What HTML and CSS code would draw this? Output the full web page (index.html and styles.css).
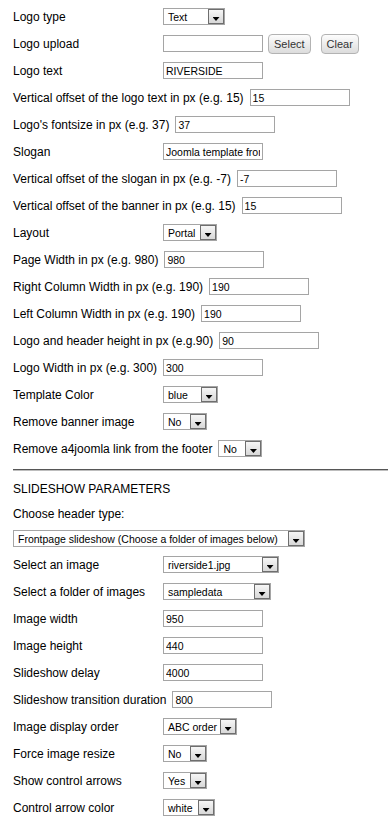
FILE: index.html
```html
<!DOCTYPE html>
<html>
<head>
<meta charset="utf-8">
<link rel="stylesheet" href="styles.css">
</head>
<body>
<div class="form">
  <div class="row"><span class="lbl">Logo type</span><span class="sel w62"><span class="sel-val">Text</span><span class="sel-arrow"></span></span></div>
  <div class="row"><span class="lbl">Logo upload</span><input class="inp" type="text" value=""><button class="btn">Select</button><button class="btn btn-gap">Clear</button></div>
  <div class="row"><span class="lbl">Logo text</span><input class="inp" type="text" value="RIVERSIDE"></div>
  <div class="row"><span class="lbl">Vertical offset of the logo text in px (e.g. 15)</span><input class="inp" type="text" value="15"></div>
  <div class="row"><span class="lbl">Logo's fontsize in px (e.g. 37)</span><input class="inp" type="text" value="37"></div>
  <div class="row"><span class="lbl">Slogan</span><input class="inp" type="text" value="Joomla template from a4joomla.com"></div>
  <div class="row"><span class="lbl">Vertical offset of the slogan in px (e.g. -7)</span><input class="inp" type="text" value="-7"></div>
  <div class="row"><span class="lbl">Vertical offset of the banner in px (e.g. 15)</span><input class="inp" type="text" value="15"></div>
  <div class="row"><span class="lbl">Layout</span><span class="sel w54"><span class="sel-val">Portal</span><span class="sel-arrow"></span></span></div>
  <div class="row"><span class="lbl">Page Width in px (e.g. 980)</span><input class="inp" type="text" value="980"></div>
  <div class="row"><span class="lbl">Right Column Width in px (e.g. 190)</span><input class="inp" type="text" value="190"></div>
  <div class="row"><span class="lbl">Left Column Width in px (e.g. 190)</span><input class="inp" type="text" value="190"></div>
  <div class="row"><span class="lbl">Logo and header height in px (e.g.90)</span><input class="inp" type="text" value="90"></div>
  <div class="row"><span class="lbl">Logo Width in px (e.g. 300)</span><input class="inp" type="text" value="300"></div>
  <div class="row"><span class="lbl">Template Color</span><span class="sel w55"><span class="sel-val">blue</span><span class="sel-arrow"></span></span></div>
  <div class="row"><span class="lbl">Remove banner image</span><span class="sel w44"><span class="sel-val">No</span><span class="sel-arrow"></span></span></div>
  <div class="row"><span class="lbl">Remove a4joomla link from the footer</span><span class="sel w44"><span class="sel-val">No</span><span class="sel-arrow"></span></span></div>

  <hr class="sep">

  <div class="row tight"><span>SLIDESHOW PARAMETERS</span></div>
  <div class="row tight"><span>Choose header type:</span></div>
  <div class="row tight"><span class="sel w292"><span class="sel-val">Frontpage slideshow (Choose a folder of images below)</span><span class="sel-arrow"></span></span></div>

  <div class="row"><span class="lbl">Select an image</span><span class="sel w116"><span class="sel-val">riverside1.jpg</span><span class="sel-arrow"></span></span></div>
  <div class="row"><span class="lbl">Select a folder of images</span><span class="sel w108"><span class="sel-val">sampledata</span><span class="sel-arrow"></span></span></div>
  <div class="row"><span class="lbl">Image width</span><input class="inp" type="text" value="950"></div>
  <div class="row"><span class="lbl">Image height</span><input class="inp" type="text" value="440"></div>
  <div class="row"><span class="lbl">Slideshow delay</span><input class="inp" type="text" value="4000"></div>
  <div class="row"><span class="lbl">Slideshow transition duration</span><input class="inp" type="text" value="800"></div>
  <div class="row"><span class="lbl">Image display order</span><span class="sel w74"><span class="sel-val">ABC order</span><span class="sel-arrow"></span></span></div>
  <div class="row"><span class="lbl">Force image resize</span><span class="sel w44"><span class="sel-val">No</span><span class="sel-arrow"></span></span></div>
  <div class="row"><span class="lbl">Show control arrows</span><span class="sel w44"><span class="sel-val">Yes</span><span class="sel-arrow"></span></span></div>
  <div class="row"><span class="lbl">Control arrow color</span><span class="sel w52"><span class="sel-val">white</span><span class="sel-arrow"></span></span></div>
</div>
</body>
</html>
```
FILE: styles.css
```css
html, body {
  margin: 0;
  padding: 0;
  background: #ffffff;
}

body {
  font-family: "Liberation Sans", Arial, sans-serif;
  font-size: 12px;
  color: #000000;
}

.form {
  padding: 3px 0 0 13px;
}

.row {
  display: flex;
  align-items: center;
  height: 27px;
  white-space: nowrap;
}

.row.tight {
  height: 25px;
}

.lbl {
  flex-shrink: 0;
  min-width: 150px;
  padding-right: 6px;
  box-sizing: border-box;
}

.inp {
  flex-shrink: 0;
  width: 100px;
  height: 17px;
  box-sizing: border-box;
  margin: 0;
  padding: 1px 2px 0 2px;
  border: 1px solid #a5a5a5;
  border-radius: 0;
  background: #ffffff;
  font-family: "Liberation Sans", Arial, sans-serif;
  font-size: 10.5px;
  color: #000000;
  outline: none;
}

.sel {
  flex-shrink: 0;
  display: flex;
  height: 17px;
  box-sizing: border-box;
  border: 1px solid #a5a5a5;
  background: #ffffff;
  font-size: 10.5px;
}

.sel-val {
  flex: 1;
  display: flex;
  align-items: center;
  padding: 1px 0 0 4px;
  overflow: hidden;
}

.sel-arrow {
  flex-shrink: 0;
  width: 16px;
  box-sizing: border-box;
  border: 1px solid #6e6e6e;
  background: linear-gradient(#f6f6f6, #d8d8d8);
  display: flex;
  justify-content: center;
  align-items: flex-end;
  padding-bottom: 2px;
}

.sel-arrow::after {
  content: "";
  width: 7px;
  height: 4px;
  background: #000000;
  clip-path: polygon(0 0, 100% 0, 50% 100%);
}

.w44 { width: 44px; }
.w52 { width: 52px; }
.w54 { width: 54px; }
.w55 { width: 55px; }
.w62 { width: 62px; }
.w74 { width: 74px; }
.w108 { width: 108px; }
.w116 { width: 116px; }
.w292 { width: 292px; }

.btn {
  flex-shrink: 0;
  height: 20px;
  margin: 0 0 0 5px;
  padding: 0 5px;
  border: 1px solid #b3b3b3;
  border-radius: 4px;
  background: linear-gradient(#fdfdfd, #dcdcdc);
  font-family: "Liberation Sans", Arial, sans-serif;
  font-size: 11px;
  color: #333333;
}

.btn-gap {
  margin-left: 10px;
}

.sep {
  height: 0;
  margin: 7px 0 5px 0;
  border: 0;
  border-top: 1px solid #565656;
  border-bottom: 1px solid #bdbdbd;
}
```
